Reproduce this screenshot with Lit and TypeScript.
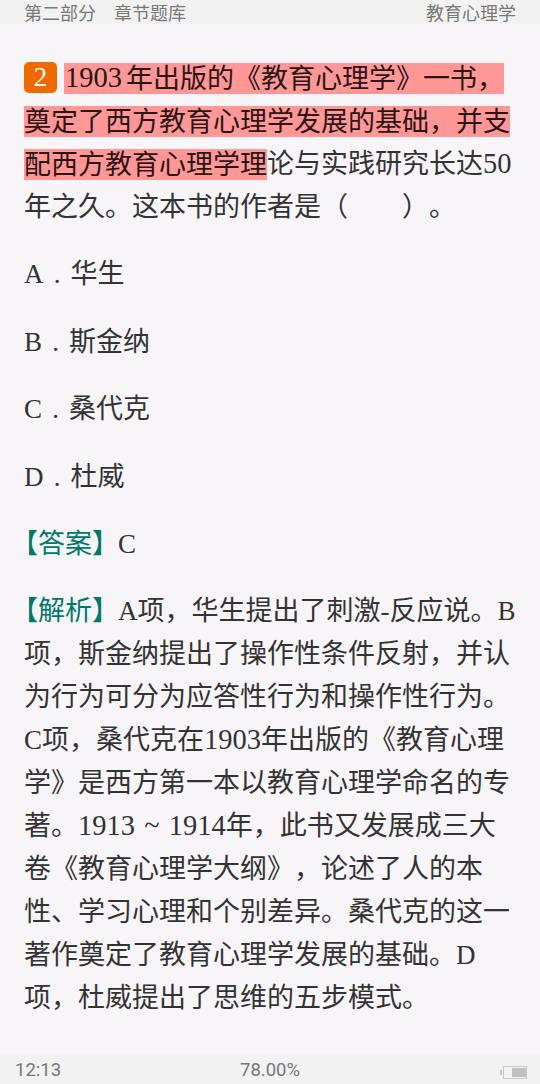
import { LitElement, html, css } from "lit";
import { customElement } from "lit/decorators.js";

@customElement("app-root")
export class AppRoot extends LitElement {
  static styles = css`
    :host { display: flex; flex-direction: column; width: 540px; height: 1084px; background: #f8f5f9; overflow: hidden;
      font-family: "Liberation Serif", "Noto Sans CJK SC", serif; color: #333; text-spacing-trim: space-all; }
    .top { height: 24px; flex: none; box-sizing: border-box; padding: 1px 24px 0; background: #f2f2f2; display: flex; justify-content: space-between; align-items: center;
      font: 18px/23px "Noto Sans CJK SC", sans-serif; color: #777; }
    .sec { display: flex; gap: 18px; }
    .body { flex: 1; padding: 33px 20px 0 24px; font-size: 27px; line-height: 43px; }
    p { margin: 0 0 24.4px; }
    .num { display: inline-block; width: 33px; height: 31px; line-height: 30px; vertical-align: 1px; border-radius: 5px; background: #ee6a00; color: #fff; text-align: center; margin-right: 7px; }
    .hl { background: #ff9797; color: #2a1414; padding: 0.5px 0; }
    .d { font-size: 28.5px; line-height: 1; word-spacing: 2px; }
    .lead { padding: 0 4px 0 1px; }
    .dot { display: inline-block; width: 27px; text-align: center; line-height: 1; }
    .tag { color: #00796b; margin-left: -13px; margin-right: -1px; }
    .bottom { height: 30px; flex: none; box-sizing: border-box; background: #f2f2f2; display: grid; grid-template-columns: 1fr 1fr 1fr; align-items: center;
      padding: 2px 15px 0; font: 18.5px/28px Roboto, sans-serif; color: #777; }
    .pct { text-align: center; }
    .bat { justify-self: end; margin: 4px -2px 0 0; display: flex; align-items: center; }
    svg { display: block; }
  `;
  render() {
    return html`
      <div class="top"><div class="sec"><span>第二部分</span><span>章节题库</span></div><span>教育心理学</span></div>
      <div class="body">
        <p><span class="num">2</span><span class="hl"><span class="d lead">1903</span>年出版的《教育心理学》一书，奠定了西方教育心理学发展的基础，并支配西方教育心理学理</span>论与实践研究长达<span class="d">50</span>年之久。这本书的作者是（　　）。</p>
        <p>A<span class="dot">.</span>华生</p>
        <p>B<span class="dot">.</span>斯金纳</p>
        <p>C<span class="dot">.</span>桑代克</p>
        <p>D<span class="dot">.</span>杜威</p>
        <p><span class="tag">【答案】</span>C</p>
        <p><span class="tag">【解析】</span>A项，华生提出了刺激-反应说。B项，斯金纳提出了操作性条件反射，并认为行为可分为应答性行为和操作性行为。C项，桑代克在<span class="d">1903</span>年出版的《教育心理学》是西方第一本以教育心理学命名的专著。<span class="d">1913 ~ 1914</span>年，此书又发展成三大卷《教育心理学大纲》，论述了人的本性、学习心理和个别差异。桑代克的这一著作奠定了教育心理学发展的基础。D项，杜威提出了思维的五步模式。</p>
      </div>
      <div class="bottom"><span>12:13</span><span class="pct">78.00%</span>
        <span class="bat"><svg width="27" height="13" viewBox="0 0 27 13"><rect x="0" y="4" width="2" height="5" fill="#c4c4c4"/><rect x="3.5" y="0.5" width="23" height="12" fill="none" stroke="#c8c8c8"/><rect x="12" y="2" width="14" height="9" fill="#c0c0c0"/></svg></span>
      </div>
    `;
  }
}
